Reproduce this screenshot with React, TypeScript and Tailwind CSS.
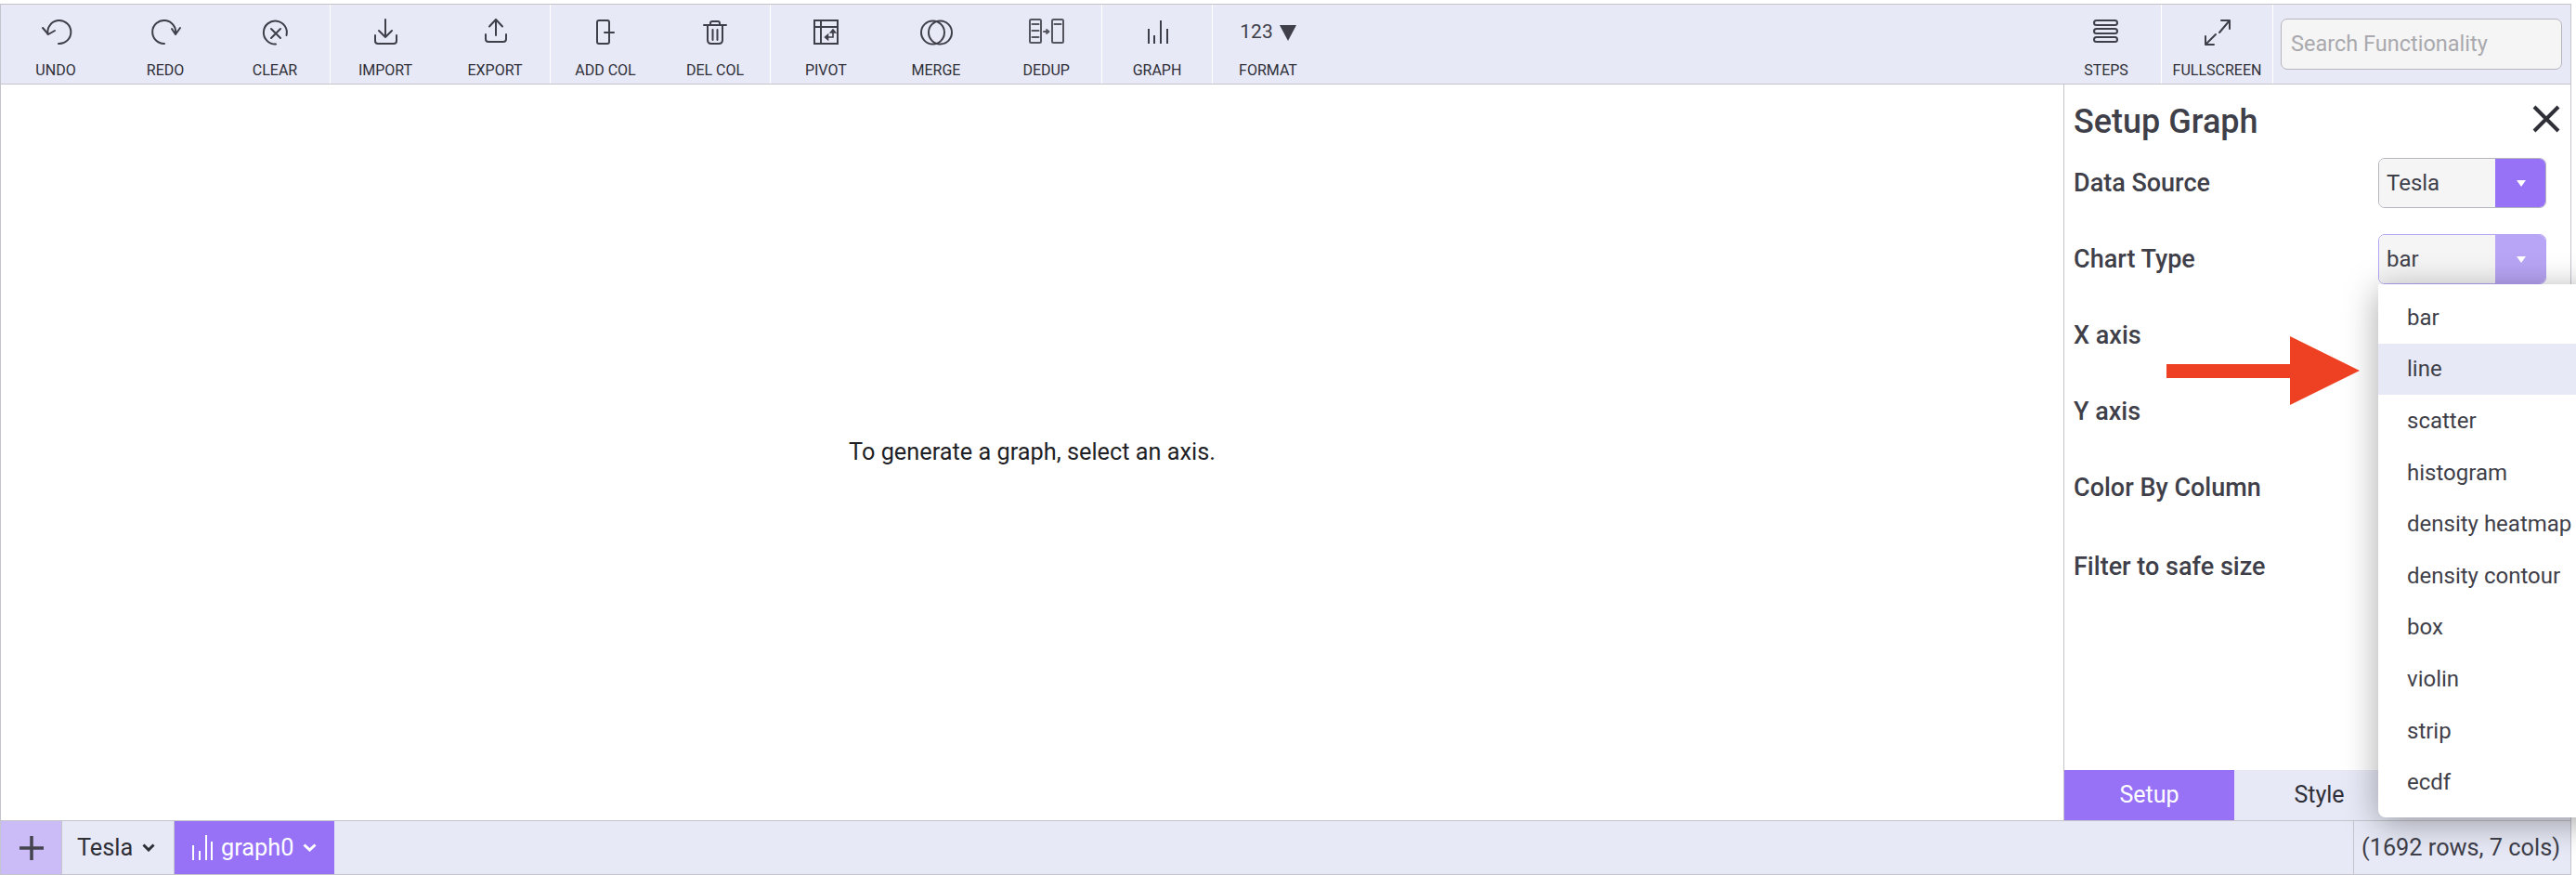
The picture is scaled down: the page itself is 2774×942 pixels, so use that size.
import React from 'react';

const PURPLE = 'bg-[#9772f7]';

// every toolbar icon sits in a 40x32 box, centred in its button
const Svg = ({ children }: { children: React.ReactNode }) => (
  <svg width="40" height="32" viewBox="0 0 40 32" fill="none" stroke="#3f3f4a" strokeWidth="2" strokeLinecap="round" strokeLinejoin="round">
    {children}
  </svg>
);

const icons: Record<string, React.ReactNode> = {
  undo: <Svg><path d="M11.5 18.5A12.5 12.5 0 1 1 23 29" /><path d="M6 12l6 7 7-4" /></Svg>,
  redo: <Svg><path d="M19 29A12.5 12.5 0 1 1 31 18.5" /><path d="M27 13l4 6 5-7" /></Svg>,
  clear: <Svg><path d="M21 29.5A12.5 12.5 0 1 1 32.5 20" /><path d="M16 13l10 10M26 13L16 23" /></Svg>,
  import: <Svg><path d="M20 3v19M13 15l7 7 7-7" /><path d="M9 20v6q0 3 3 3h17q3 0 3-3v-6" /></Svg>,
  export: <Svg><path d="M21 3v17M14 10.5L21 3l7 7.5" /><path d="M10 19v5q0 3 3 3h16q3 0 3-3v-5" /></Svg>,
  addcol: <Svg><path d="M24 11V6q0-2-2-2h-9q-2 0-2 2v21q0 2 2 2h9q2 0 2-2v-3" /><path d="M19 17h10M24 12v11" /></Svg>,
  delcol: <Svg><path d="M8 9h24M15 9V7q0-2 2-2h6q2 0 2 2v2" /><path d="M12 9v16q0 4 4 4h8q4 0 4-4V9" /><path d="M17.5 14v11M22.5 14v11" /></Svg>,
  pivot: (
    <Svg>
      <path d="M8 4h25v25H8zM8 11h25M15 4v25" strokeLinecap="butt" strokeLinejoin="miter" />
      <path d="M21 22h7v-6M19.5 22l3-2.5v5zM28 14l2.5 3h-5z" strokeWidth="1.6" strokeLinejoin="miter" />
    </Svg>
  ),
  merge: <Svg><circle cx="16.5" cy="17" r="12.5" /><circle cx="24.5" cy="17" r="12.5" /></Svg>,
  dedup: (
    <Svg>
      <rect x="2" y="3" width="12" height="25" rx="1.5" stroke="#55555f" />
      <path d="M4.5 8h7M4.5 15h7M4.5 22h7" stroke="#55555f" />
      <rect x="26" y="3" width="12" height="25" rx="1.5" stroke="#55555f" />
      <path d="M28.5 8h7M17 16h5M20 14l2.5 2-2.5 2" stroke="#55555f" />
    </Svg>
  ),
  graph: <Svg><path d="M11 13v16M17 20v9M24 4v25M31 13v16" strokeLinecap="butt" /></Svg>,
  steps: (
    <Svg>
      <rect x="7" y="4" width="25" height="5" rx="2.5" />
      <rect x="7" y="13" width="25" height="5" rx="2.5" />
      <rect x="7" y="22" width="25" height="5" rx="2.5" />
    </Svg>
  ),
  fullscreen: <Svg><path d="M22 17L33 4M24 4h9v9M18 19L7 30M7 21v9h9" /></Svg>,
};

const ToolButton = ({ icon, label }: { icon: string; label: string }) => (
  <div className="flex-1 flex flex-col items-center pt-[13px]">
    <div className="h-[32px] flex items-center justify-center">{icons[icon]}</div>
    <div className="mt-[16px] text-[16px] leading-[20px] text-[#2f2f38] whitespace-nowrap">{label}</div>
  </div>
);

const Group = ({ width, children }: { width: string; children: React.ReactNode }) => (
  <div className={`flex border-r border-white ${width}`}>{children}</div>
);

const FormatButton = () => (
  <div className="flex-1 flex flex-col items-center pt-[13px]">
    <div className="h-[32px] pt-[2px] flex items-center justify-center gap-[7px] text-[21px] text-[#3f3f4a]">
      123
      <svg width="18" height="17" viewBox="0 0 18 17"><path d="M0 0h18L9 17z" fill="#3f3f4a" /></svg>
    </div>
    <div className="mt-[16px] text-[16px] leading-[20px] text-[#2f2f38]">FORMAT</div>
  </div>
);

const Toolbar = () => (
  <div className="flex h-[86px] bg-[#e7e9f6] border-b border-[#c4c4cc]">
    <Group width="w-[355px]">
      <ToolButton icon="undo" label="UNDO" />
      <ToolButton icon="redo" label="REDO" />
      <ToolButton icon="clear" label="CLEAR" />
    </Group>
    <Group width="w-[237px]">
      <ToolButton icon="import" label="IMPORT" />
      <ToolButton icon="export" label="EXPORT" />
    </Group>
    <Group width="w-[237px]">
      <ToolButton icon="addcol" label="ADD COL" />
      <ToolButton icon="delcol" label="DEL COL" />
    </Group>
    <Group width="w-[357px]">
      <ToolButton icon="pivot" label="PIVOT" />
      <ToolButton icon="merge" label="MERGE" />
      <ToolButton icon="dedup" label="DEDUP" />
    </Group>
    <Group width="w-[119px]">
      <ToolButton icon="graph" label="GRAPH" />
    </Group>
    <div className="flex w-[119px]">
      <FormatButton />
    </div>
    <div className="ml-auto flex">
      <Group width="w-[119px]">
        <ToolButton icon="steps" label="STEPS" />
      </Group>
      <Group width="w-[120px]">
        <ToolButton icon="fullscreen" label="FULLSCREEN" />
      </Group>
      <div className="ml-[8px] mr-[9px] mt-[15px] w-[303px] h-[55px] rounded-[7px] border border-[#b5b5bd] bg-[#f5f5f5] px-[10px] flex items-center text-[23.5px] text-[#a9a9ae]">
        Search Functionality
      </div>
    </div>
  </div>
);

const Select = ({ value, dim }: { value: string; dim?: boolean }) => (
  <div className={`flex w-[181px] h-[54px] rounded-[7px] overflow-hidden border ${dim ? 'border-[#b5a3f4]' : 'border-[#b5b5bd]'}`}>
    <div className="flex-1 bg-[#f5f5f5] px-[8px] flex items-center text-[24px] text-[#3f3f4a]">{value}</div>
    <div className={`w-[55px] -my-px -mr-px flex items-center justify-center ${dim ? 'bg-[#b8a5f5]' : PURPLE}`}>
      <svg width="10" height="7" viewBox="0 0 10 7"><path d="M0 0h10L5 7z" fill="#fff" /></svg>
    </div>
  </div>
);

const Row = ({ label, children, className = '' }: { label: string; children?: React.ReactNode; className?: string }) => (
  <div className={`h-[82px] flex items-center justify-between pr-[26px] ${className}`}>
    <div className="text-[27px] font-medium text-[#3f3f4a]">{label}</div>
    {children}
  </div>
);

const chartTypes = ['bar', 'line', 'scatter', 'histogram', 'density heatmap', 'density contour', 'box', 'violin', 'strip', 'ecdf'];

const ChartDropdown = () => (
  <div className="absolute z-20 left-0 top-full w-[320px] bg-white rounded-bl-[8px] py-[8px] pb-[10px] shadow-[0_6px_36px_rgba(0,0,0,0.35)]">
    {chartTypes.map((t) => (
      <div key={t} className={`h-[55.6px] pl-[31px] flex items-center text-[24px] text-[#3f3f4a] ${t === 'line' ? 'bg-[#e7e9f6]' : ''}`}>
        {t}
      </div>
    ))}
  </div>
);

const GraphPanel = () => (
  <div className="w-[546px] border-l border-[#c4c4cc] flex flex-col">
    <div className="flex-1 pl-[10px]">
      <div className="h-[65px] pt-[14px] flex items-center justify-between pr-[11px]">
        <div className="text-[36px] font-medium text-[#3f3f4a]">Setup Graph</div>
        <svg width="30" height="30" viewBox="0 0 30 30" className="-mt-[5px]"><path d="M2 2l26 26M28 2L2 28" stroke="#2f2f38" strokeWidth="4" /></svg>
      </div>
      <Row label="Data Source"><Select value="Tesla" /></Row>
      <Row label="Chart Type">
        <div className="relative">
          <Select value="bar" dim />
          <ChartDropdown />
        </div>
      </Row>
      <Row label="X axis" />
      <Row label="Y axis" />
      <Row label="Color By Column" />
      <Row label="Filter to safe size" className="mt-[3px]" />
    </div>
    <div className="flex h-[54px] text-[25px]">
      <div className={`w-[183px] ${PURPLE} text-white flex items-center justify-center`}>Setup</div>
      <div className="w-[183px] bg-[#e7e9f6] text-[#2f2f38] flex items-center justify-center">Style</div>
      <div className="flex-1 bg-[#e7e9f6]" />
    </div>
  </div>
);

const Footer = () => (
  <div className="flex h-[58px] bg-[#e7e9f6] border-t border-[#c4c4cc] text-[25.3px]">
    <div className="w-[65px] bg-[#cbbcf8] flex items-center justify-center">
      <svg width="26" height="26" viewBox="0 0 26 26"><path d="M0 13h26M13 0v26" stroke="#44444e" strokeWidth="3.5" strokeLinecap="round" /></svg>
    </div>
    <div className="w-[122px] border-x border-[#c4c4cc] flex items-center pl-[16px] gap-[10px] text-[#2f2f38]">
      Tesla
      <svg width="14" height="9" viewBox="0 0 14 9"><path d="M1.5 1.5L7 7l5.5-5.5" fill="none" stroke="#2f2f38" strokeWidth="3" /></svg>
    </div>
    <div className={`w-[172px] ${PURPLE} text-white flex items-center pl-[19px]`}>
      <svg width="22" height="27" viewBox="0 0 22 27" className="mr-[9px]"><path d="M1 11v16M8 17v10M15 0v27M21 7v20" stroke="#fff" strokeWidth="2" /></svg>
      graph0
      <svg width="15" height="9" viewBox="0 0 15 9" className="ml-[10px]"><path d="M1.5 1.5L7.5 7l6-5.5" fill="none" stroke="#fff" strokeWidth="3" /></svg>
    </div>
    <div className="ml-auto w-[234px] border-l border-[#c4c4cc] flex items-center pl-[8px] text-[#3f3f4a] whitespace-nowrap">
      (1692 rows, 7 cols)
    </div>
  </div>
);

export default function App() {
  return (
    <div className="relative w-screen h-screen overflow-hidden bg-white pt-[4px] font-['Roboto',sans-serif]">
      <div className="h-[938px] w-[2769px] flex flex-col border border-[#c4c4cc]">
        <Toolbar />
        <div className="flex-1 flex min-h-0">
          <div className="flex-1 flex items-center justify-center text-[25.3px] text-[#1f1f26]">
            To generate a graph, select an axis.
          </div>
          <GraphPanel />
        </div>
        <Footer />
      </div>
      {/* red annotation arrow drawn over the screenshot */}
      <svg className="absolute z-30 left-[2333px] top-[362px]" width="208" height="74" viewBox="0 0 208 74">
        <path d="M0 30h133V0l75 37-75 37V45H0z" fill="#ee4023" />
      </svg>
    </div>
  );
}
